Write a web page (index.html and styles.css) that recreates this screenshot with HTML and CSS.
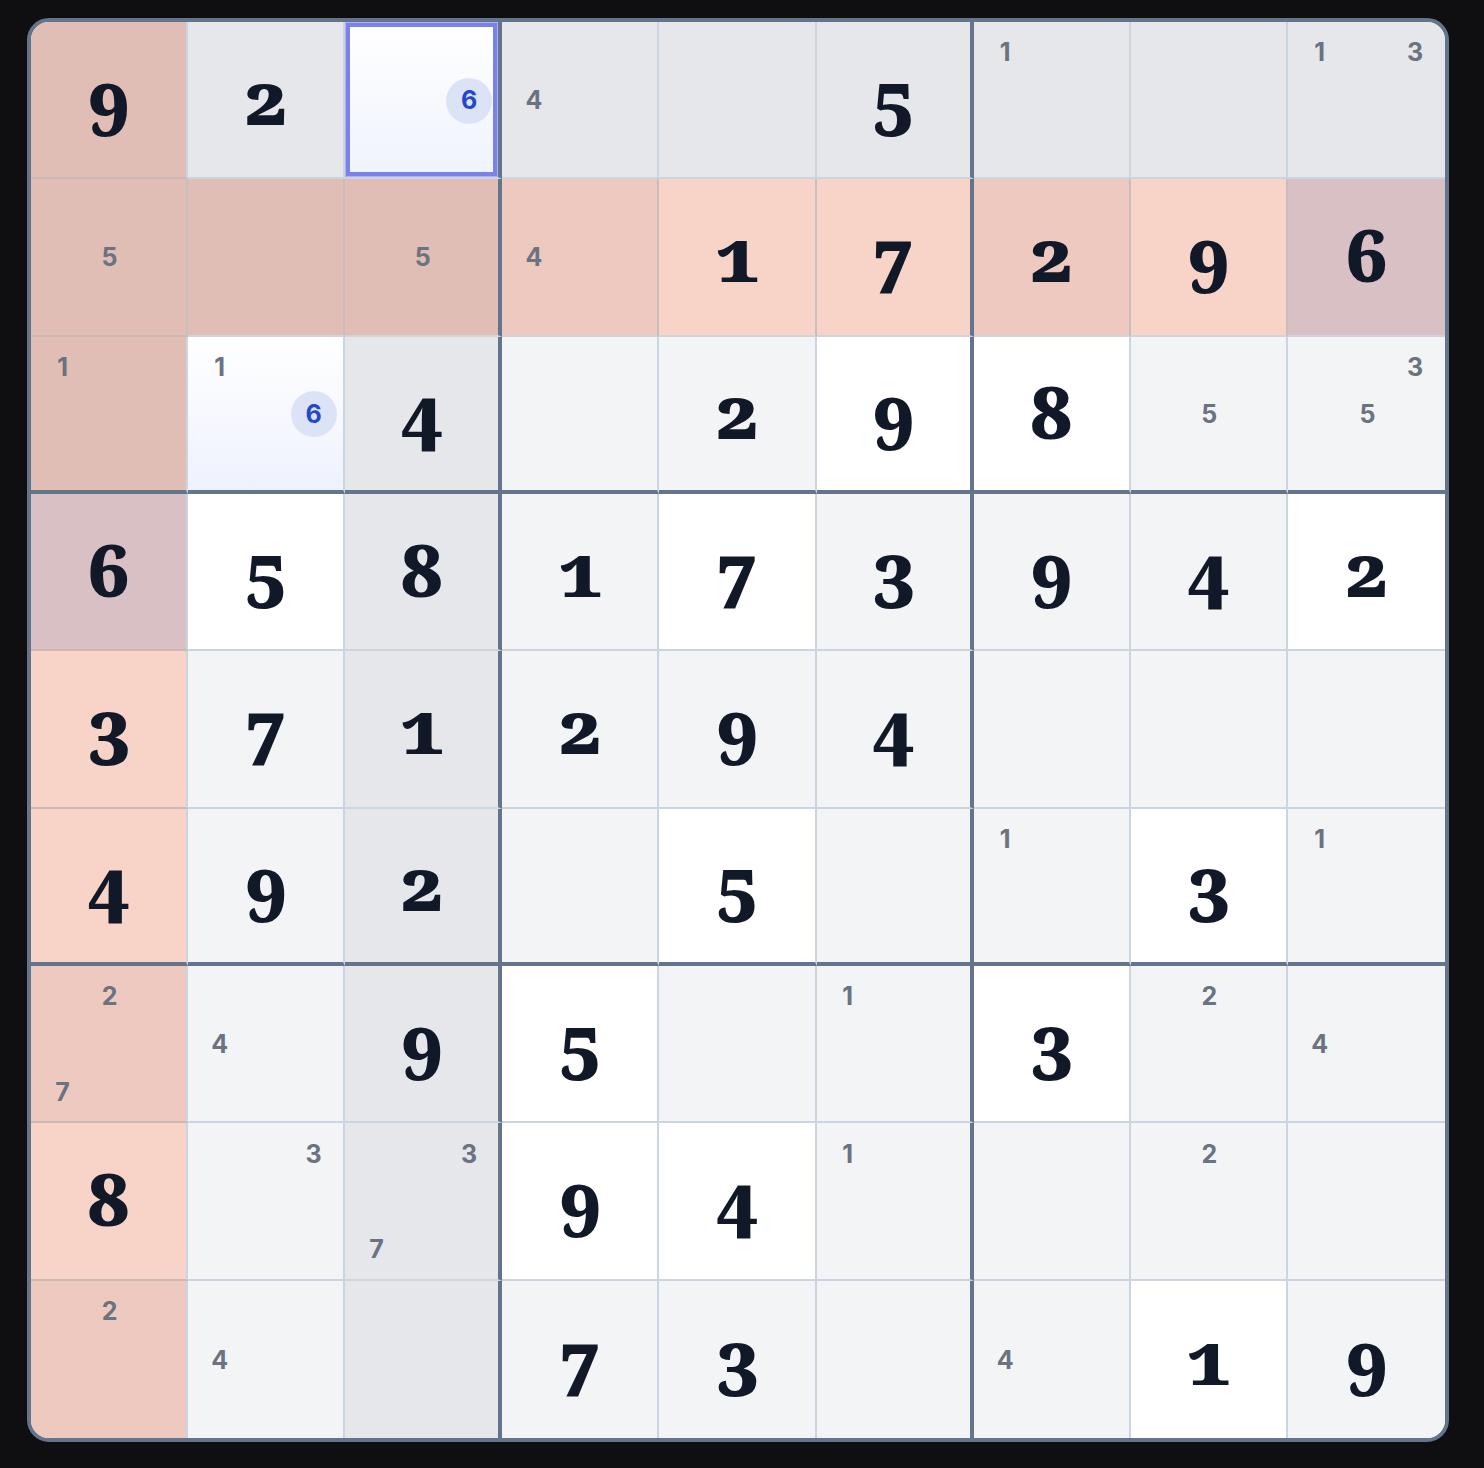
FILE: index.html
```html
<!DOCTYPE html>
<html lang="en">
<head>
<meta charset="utf-8">
<title>Sudoku</title>
<link rel="stylesheet" href="styles.css">
</head>
<body>
<div class="page">
  <div class="board">
    <!-- Row 1 -->
    <div class="cell pa"><span class="digit">9</span></div>
    <div class="cell g2"><span class="digit">2</span></div>
    <div class="cell sel"><div class="notes"><span class="n n6 hot">6</span></div></div>
    <div class="cell g2"><div class="notes"><span class="n n4">4</span></div></div>
    <div class="cell g2"></div>
    <div class="cell g2"><span class="digit">5</span></div>
    <div class="cell g2"><div class="notes"><span class="n n1">1</span></div></div>
    <div class="cell g2"></div>
    <div class="cell g2"><div class="notes"><span class="n n1">1</span><span class="n n3">3</span></div></div>
    <!-- Row 2 -->
    <div class="cell pa"><div class="notes"><span class="n n5">5</span></div></div>
    <div class="cell pa"></div>
    <div class="cell pa"><div class="notes"><span class="n n5">5</span></div></div>
    <div class="cell pb"><div class="notes"><span class="n n4">4</span></div></div>
    <div class="cell pc"><span class="digit">1</span></div>
    <div class="cell pc"><span class="digit">7</span></div>
    <div class="cell pb"><span class="digit">2</span></div>
    <div class="cell pc"><span class="digit">9</span></div>
    <div class="cell pd"><span class="digit">6</span></div>
    <!-- Row 3 -->
    <div class="cell pa"><div class="notes"><span class="n n1">1</span></div></div>
    <div class="cell hl"><div class="notes"><span class="n n1">1</span><span class="n n6 hot">6</span></div></div>
    <div class="cell g2"><span class="digit">4</span></div>
    <div class="cell g1"></div>
    <div class="cell g1"><span class="digit">2</span></div>
    <div class="cell w"><span class="digit">9</span></div>
    <div class="cell w"><span class="digit">8</span></div>
    <div class="cell g1"><div class="notes"><span class="n n5">5</span></div></div>
    <div class="cell g1"><div class="notes"><span class="n n3">3</span><span class="n n5">5</span></div></div>
    <!-- Row 4 -->
    <div class="cell pd"><span class="digit">6</span></div>
    <div class="cell w"><span class="digit">5</span></div>
    <div class="cell g2"><span class="digit">8</span></div>
    <div class="cell g1"><span class="digit">1</span></div>
    <div class="cell w"><span class="digit">7</span></div>
    <div class="cell g1"><span class="digit">3</span></div>
    <div class="cell g1"><span class="digit">9</span></div>
    <div class="cell g1"><span class="digit">4</span></div>
    <div class="cell w"><span class="digit">2</span></div>
    <!-- Row 5 -->
    <div class="cell pc"><span class="digit">3</span></div>
    <div class="cell g1"><span class="digit">7</span></div>
    <div class="cell g2"><span class="digit">1</span></div>
    <div class="cell g1"><span class="digit">2</span></div>
    <div class="cell g1"><span class="digit">9</span></div>
    <div class="cell g1"><span class="digit">4</span></div>
    <div class="cell g1"></div>
    <div class="cell g1"></div>
    <div class="cell g1"></div>
    <!-- Row 6 -->
    <div class="cell pc"><span class="digit">4</span></div>
    <div class="cell g1"><span class="digit">9</span></div>
    <div class="cell g2"><span class="digit">2</span></div>
    <div class="cell g1"></div>
    <div class="cell w"><span class="digit">5</span></div>
    <div class="cell g1"></div>
    <div class="cell g1"><div class="notes"><span class="n n1">1</span></div></div>
    <div class="cell w"><span class="digit">3</span></div>
    <div class="cell g1"><div class="notes"><span class="n n1">1</span></div></div>
    <!-- Row 7 -->
    <div class="cell pb"><div class="notes"><span class="n n2">2</span><span class="n n7">7</span></div></div>
    <div class="cell g1"><div class="notes"><span class="n n4">4</span></div></div>
    <div class="cell g2"><span class="digit">9</span></div>
    <div class="cell w"><span class="digit">5</span></div>
    <div class="cell g1"></div>
    <div class="cell g1"><div class="notes"><span class="n n1">1</span></div></div>
    <div class="cell w"><span class="digit">3</span></div>
    <div class="cell g1"><div class="notes"><span class="n n2">2</span></div></div>
    <div class="cell g1"><div class="notes"><span class="n n4">4</span></div></div>
    <!-- Row 8 -->
    <div class="cell pc"><span class="digit">8</span></div>
    <div class="cell g1"><div class="notes"><span class="n n3">3</span></div></div>
    <div class="cell g2"><div class="notes"><span class="n n3">3</span><span class="n n7">7</span></div></div>
    <div class="cell w"><span class="digit">9</span></div>
    <div class="cell w"><span class="digit">4</span></div>
    <div class="cell g1"><div class="notes"><span class="n n1">1</span></div></div>
    <div class="cell g1"></div>
    <div class="cell g1"><div class="notes"><span class="n n2">2</span></div></div>
    <div class="cell g1"></div>
    <!-- Row 9 -->
    <div class="cell pb"><div class="notes"><span class="n n2">2</span></div></div>
    <div class="cell g1"><div class="notes"><span class="n n4">4</span></div></div>
    <div class="cell g2"></div>
    <div class="cell g1"><span class="digit">7</span></div>
    <div class="cell g1"><span class="digit">3</span></div>
    <div class="cell g1"></div>
    <div class="cell g1"><div class="notes"><span class="n n4">4</span></div></div>
    <div class="cell w"><span class="digit">1</span></div>
    <div class="cell g1"><span class="digit">9</span></div>
  </div>
</div>
</body>
</html>
```
FILE: styles.css
```css
html, body {
  margin: 0;
  padding: 0;
  background: #0f0f12;
}

.page {
  padding: 18px 0 0 27px;
  min-height: 1468px;
  box-sizing: border-box;
}

.board {
  width: 1422px;
  height: 1424px;
  box-sizing: border-box;
  border: 4px solid #64748b;
  border-radius: 22px;
  overflow: hidden;
  background: #f3f4f6;
  display: grid;
  grid-template-columns: repeat(9, 1fr);
  grid-template-rows: repeat(9, 1fr);
}

.cell {
  position: relative;
  box-sizing: border-box;
  display: flex;
  align-items: center;
  justify-content: center;
  min-width: 0;
  min-height: 0;
  border-right: 2px solid #cbd5e1;
  border-bottom: 2px solid #cbd5e1;
}

/* conflict highlight tints the lines it spans */
.cell:nth-child(9n+1) { border-bottom-color: #cdb8b3; }
.cell:nth-child(n+10):nth-child(-n+18) { border-right-color: #cbbdbb; }

/* last column / last row */
.cell:nth-child(9n) { border-right: 0; }
.cell:nth-child(n+73) { border-bottom: 0; }

/* box borders */
.cell:nth-child(9n+3),
.cell:nth-child(9n+6) { border-right: 4px solid #64748b; }
.cell:nth-child(n+10):nth-child(-n+18):nth-child(3n) { border-right-color: #64748b; }
.cell:nth-child(n+19):nth-child(-n+27),
.cell:nth-child(n+46):nth-child(-n+54) { border-bottom: 4px solid #64748b; }

.w  { background-color: #ffffff; }
.g1 { background-color: #f3f4f6; }
.g2 { background-color: #e5e7eb; }
.pa { background-color: #e0beb5; }
.pb { background-color: #eec9c0; }
.pc { background-color: #f8d3c7; }
.pd { background-color: #d9c0c5; }

.hl {
  background: linear-gradient(180deg, #ffffff 0%, #eef2fd 100%);
}

.sel {
  background: linear-gradient(180deg, #ffffff 0%, #eff3fd 100%);
  box-shadow: inset 0 0 0 1px #a9b2f2, inset 0 0 0 5px #7a82ea;
}

.digit {
  font-family: "Noto Serif", "DejaVu Serif", serif;
  font-weight: 900;
  font-size: 73px;
  line-height: 1;
  color: #111827;
  font-variant-numeric: oldstyle-nums;
  padding-bottom: 6px;
}

.notes {
  position: absolute;
  inset: 0;
  padding: 7px 6px 5px 8px;
  display: grid;
  grid-template-columns: repeat(3, 1fr);
  grid-template-rows: repeat(3, 1fr);
}

.n {
  display: flex;
  align-items: center;
  justify-content: center;
  font-family: Inter, "Noto Sans", sans-serif;
  font-weight: 700;
  font-size: 25px;
  line-height: 1;
  color: #6b7280;
}

.n1 { grid-column: 1; grid-row: 1; }
.n2 { grid-column: 2; grid-row: 1; }
.n3 { grid-column: 3; grid-row: 1; }
.n4 { grid-column: 1; grid-row: 2; }
.n5 { grid-column: 2; grid-row: 2; }
.n6 { grid-column: 3; grid-row: 2; }
.n7 { grid-column: 1; grid-row: 3; }
.n8 { grid-column: 2; grid-row: 3; }
.n9 { grid-column: 3; grid-row: 3; }

.hot {
  justify-self: center;
  align-self: center;
  width: 46px;
  height: 46px;
  border-radius: 50%;
  background: #dde3f7;
  color: #2448cc;
}
```
